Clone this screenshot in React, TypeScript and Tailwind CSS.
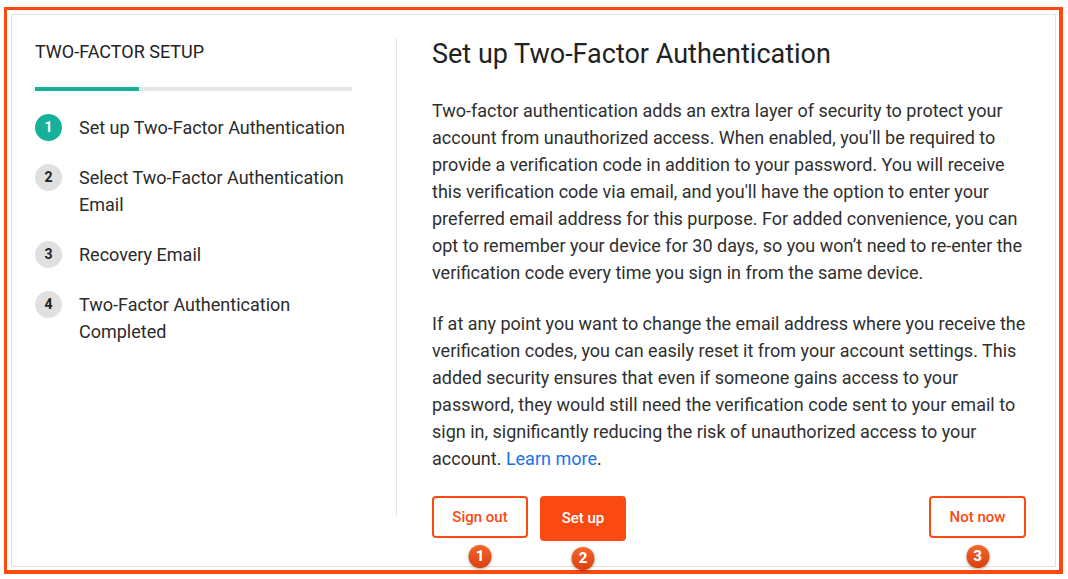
import React from 'react';

const steps = [
  { n: 1, label: 'Set up Two-Factor Authentication', active: true },
  { n: 2, label: 'Select Two-Factor Authentication Email', active: false },
  { n: 3, label: 'Recovery Email', active: false },
  { n: 4, label: 'Two-Factor Authentication Completed', active: false },
];

const Badge = ({ n }: { n: number }) => (
  <span className="absolute left-1/2 top-full mt-[9px] -translate-x-1/2 w-[23px] h-[23px] rounded-full bg-gradient-to-b from-[#f3662b] to-[#d9400e] text-white text-[15px] font-extrabold leading-none flex items-center justify-center shadow-[0_1px_3px_rgba(0,0,0,0.35)]">
    {n}
  </span>
);

const App = () => {
  return (
    <div className="w-[1068px] h-[579px] bg-white pt-[7px] pl-[4px] font-['Roboto',sans-serif]">
      {/* Orange annotation frame */}
      <div className="w-[1059px] h-[567px] border-[3px] border-r-4 border-b-4 border-[#fa4a0f] pt-[4px] pl-[4px] pr-[3px] pb-[3px]">
        <div className="h-full border border-[#e2e2e2] pl-[23px] pr-[24px] pt-[23px] pb-[25px] flex">
          {/* Left: stepper */}
          <div className="w-[362px] shrink-0 border-r border-[#e4e4e4] mb-[25px] pr-[44px]">
            <h2 className="pt-[2px] text-[18px] leading-[24px] text-[#222] uppercase">Two-Factor Setup</h2>
            <div className="mt-[23px] h-[4px] bg-[#e6e6e6] flex">
              <div className="w-[104px] bg-[#16b09b]" />
            </div>
            <ol className="mt-[23px] flex flex-col gap-[23px]">
              {steps.map((s) => (
                <li key={s.n} className="flex items-start gap-[17px]">
                  <span
                    className={
                      s.active
                        ? 'w-[27px] h-[27px] shrink-0 rounded-full bg-[#16b09b] text-white text-[14px] font-bold flex items-center justify-center'
                        : 'w-[27px] h-[27px] shrink-0 rounded-full bg-[#e0e0e0] text-[#222] text-[14px] font-bold flex items-center justify-center'
                    }
                  >
                    {s.n}
                  </span>
                  <span className="text-[18px] leading-[27px] text-[#2b2b2b]">{s.label}</span>
                </li>
              ))}
            </ol>
          </div>

          {/* Right: content */}
          <div className="flex-1 pl-[35px] flex flex-col">
            <h1 className="text-[27px] leading-[32px] text-[#222]">Set up Two-Factor Authentication</h1>
            <p className="mt-[27px] text-[18px] leading-[27px] text-[#2f2f2f]">
              Two-factor authentication adds an extra layer of security to protect your account from unauthorized
              access. When enabled, you'll be required to provide a verification code in addition to your password. You
              will receive this verification code via email, and you'll have the option to enter your preferred email
              address for this purpose. For added convenience, you can opt to remember your device for 30 days, so you
              won’t need to re-enter the verification code every time you sign in from the same device.
            </p>
            <p className="mt-[24px] text-[18px] leading-[27px] text-[#2f2f2f]">
              If at any point you want to change the email address where you receive the verification codes, you can
              easily reset it from your account settings. This added security ensures that even if someone gains access
              to your password, they would still need the verification code sent to your email to sign in,
              significantly reducing the risk of unauthorized access to your account.{' '}
              <a href="#" className="text-[#1a73e8]">Learn more</a>.
            </p>
            <div className="mt-auto flex items-start justify-between mr-[5px]">
              <div className="flex items-start gap-[12px]">
                <button className="relative w-[96px] h-[42px] rounded-[4px] border-2 border-[#fa4a12] text-[#fa4a12] text-[15px] font-medium bg-white">
                  Sign out
                  <Badge n={1} />
                </button>
                <button className="relative w-[86px] h-[45px] rounded-[4px] bg-[#fa4a12] text-white text-[15px] font-medium">
                  Set up
                  <span className="absolute left-1/2 top-full mt-[6px] -translate-x-1/2 w-[23px] h-[23px] rounded-full bg-gradient-to-b from-[#f3662b] to-[#d9400e] text-white text-[15px] font-extrabold leading-none flex items-center justify-center shadow-[0_1px_3px_rgba(0,0,0,0.35)]">
                    2
                  </span>
                </button>
              </div>
              <button className="relative w-[97px] h-[42px] rounded-[4px] border-2 border-[#fa4a12] text-[#fa4a12] text-[15px] font-medium bg-white">
                Not now
                <Badge n={3} />
              </button>
            </div>
          </div>
        </div>
      </div>
    </div>
  );
};

export default App;
